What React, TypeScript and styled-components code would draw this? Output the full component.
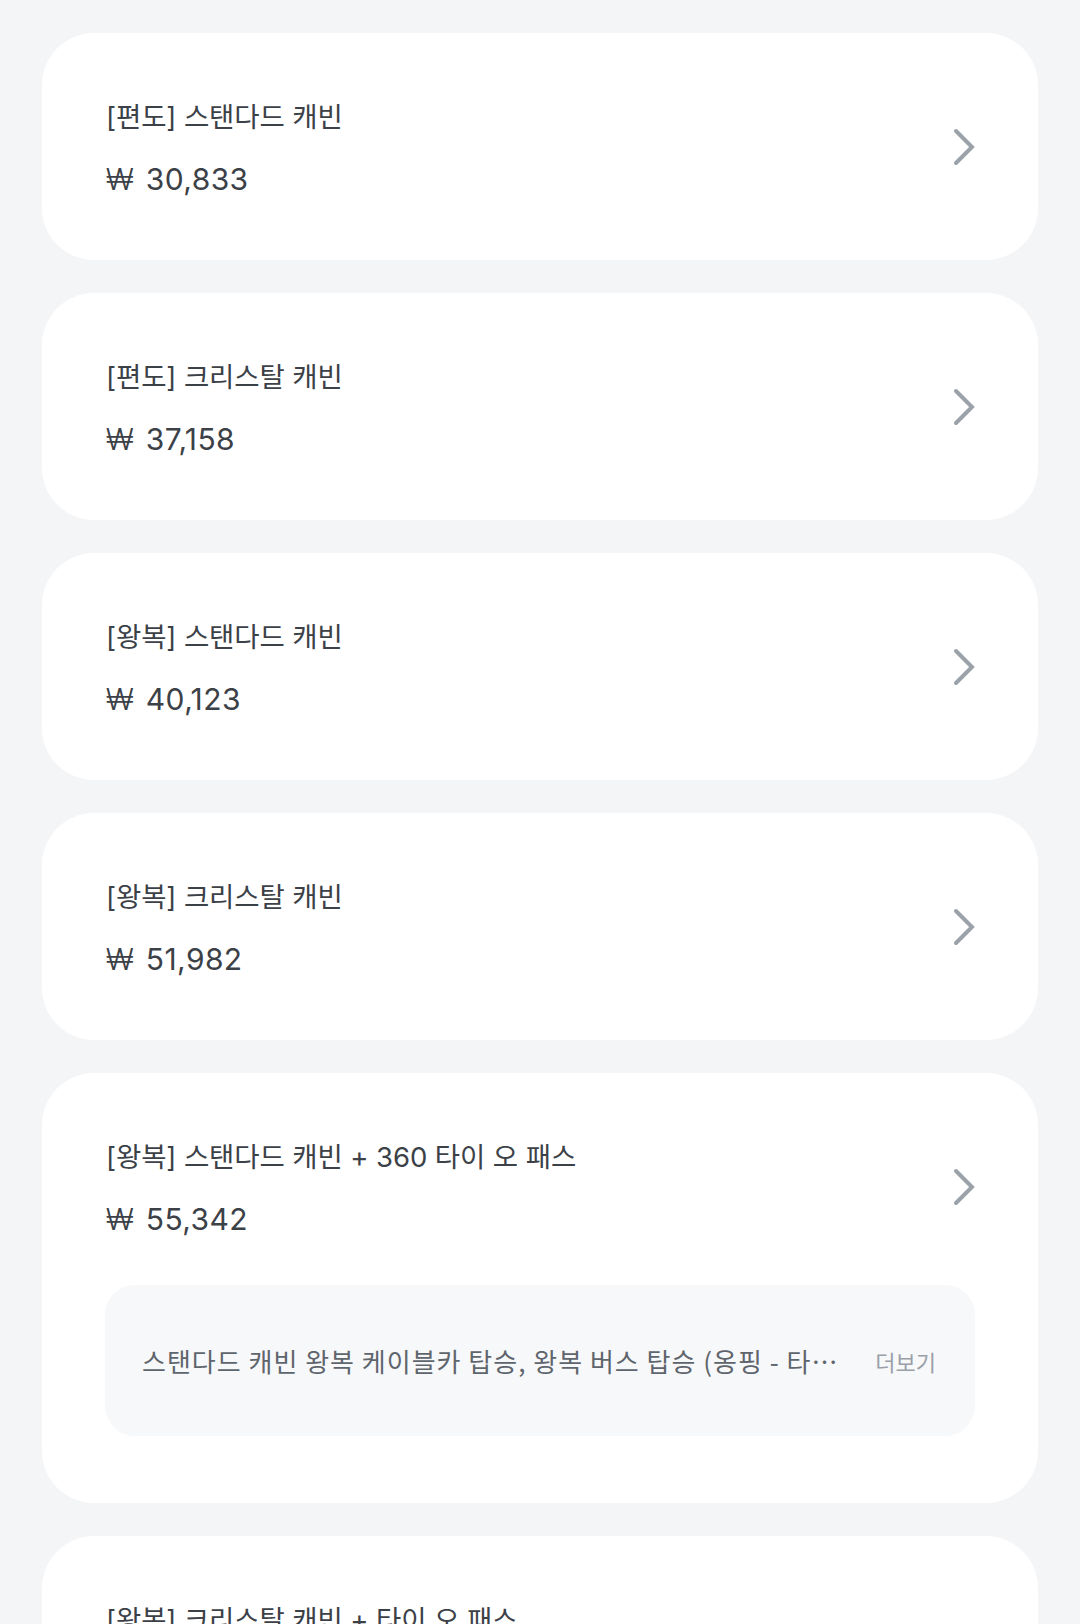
import React from 'react';
import styled, { createGlobalStyle } from 'styled-components';

const GlobalStyle = createGlobalStyle`
  html, body {
    margin: 0;
    padding: 0;
    background: #f4f5f7;
  }
  body {
    font-family: Inter, "Noto Sans CJK KR", sans-serif;
    -webkit-font-smoothing: antialiased;
  }
`;

const Page = styled.div`
  display: flex;
  flex-direction: column;
  gap: 33px;
  padding: 33px 42px 40px;
  background: #f4f5f7;
`;

const Card = styled.div`
  background: #ffffff;
  border-radius: 52px;
  padding: 64px 63px 59px 64px;
`;

const InfoRow = styled.div`
  display: flex;
  align-items: center;
  justify-content: space-between;
`;

const TextBlock = styled.div`
  display: flex;
  flex-direction: column;
  gap: 20px;
`;

const Title = styled.div`
  height: 40px;
  font-size: 27.5px;
  line-height: 40px;
  color: #3c4147;
  letter-spacing: -0.1px;
  white-space: nowrap;
`;

const Price = styled.div`
  height: 44px;
  font-size: 30px;
  line-height: 44px;
  color: #3c4147;
  letter-spacing: 0.4px;
  white-space: nowrap;
`;

const Won = styled.span`
  margin-right: 3px;
  font-weight: 300;
`;

const Chevron = styled.svg`
  width: 24px;
  height: 40px;
  flex-shrink: 0;
  margin: 0 -1px 4px 0;
`;

const Note = styled.div`
  display: flex;
  align-items: center;
  height: 151px;
  margin: 44px 0 8px -1px;
  padding: 0 39px 0 37px;
  background: #f7f8fa;
  border-radius: 30px;
`;

const NoteText = styled.span`
  flex: 1;
  min-width: 0;
  font-family: "Noto Sans CJK KR", sans-serif;
  font-size: 26px;
  letter-spacing: 1px;
  color: #5f656c;
  white-space: nowrap;
  overflow: hidden;
  text-overflow: ellipsis;
`;

const More = styled.span`
  flex-shrink: 0;
  margin-left: 22px;
  font-size: 22px;
  color: #9aa0a7;
`;

type Product = {
  title: string;
  price: string;
  note?: string;
};

const products: Product[] = [
  { title: '[편도] 스탠다드 캐빈', price: '30,833' },
  { title: '[편도] 크리스탈 캐빈', price: '37,158' },
  { title: '[왕복] 스탠다드 캐빈', price: '40,123' },
  { title: '[왕복] 크리스탈 캐빈', price: '51,982' },
  {
    title: '[왕복] 스탠다드 캐빈 + 360 타이 오 패스',
    price: '55,342',
    note: '스탠다드 캐빈 왕복 케이블카 탑승, 왕복 버스 탑승 (옹핑 - 타이 오) 및 타이 오 마을 가이드 투어',
  },
  { title: '[왕복] 크리스탈 캐빈 + 타이 오 패스', price: '61,667' },
];

function ChevronIcon() {
  return (
    <Chevron viewBox="0 0 24 40" fill="none">
      <polyline
        points="4,4 20,20 4,36"
        stroke="#9ba2a9"
        strokeWidth="4"
        strokeLinecap="round"
        strokeLinejoin="miter"
      />
    </Chevron>
  );
}

function ProductCard({ item }: { item: Product }) {
  return (
    <Card>
      <InfoRow>
        <TextBlock>
          <Title>{item.title}</Title>
          <Price>
            <Won>₩</Won> {item.price}
          </Price>
        </TextBlock>
        <ChevronIcon />
      </InfoRow>
      {item.note && (
        <Note>
          <NoteText>{item.note}</NoteText>
          <More>더보기</More>
        </Note>
      )}
    </Card>
  );
}

export default function App() {
  return (
    <>
      <GlobalStyle />
      <Page>
        {products.map((p) => (
          <ProductCard key={p.title} item={p} />
        ))}
      </Page>
    </>
  );
}
